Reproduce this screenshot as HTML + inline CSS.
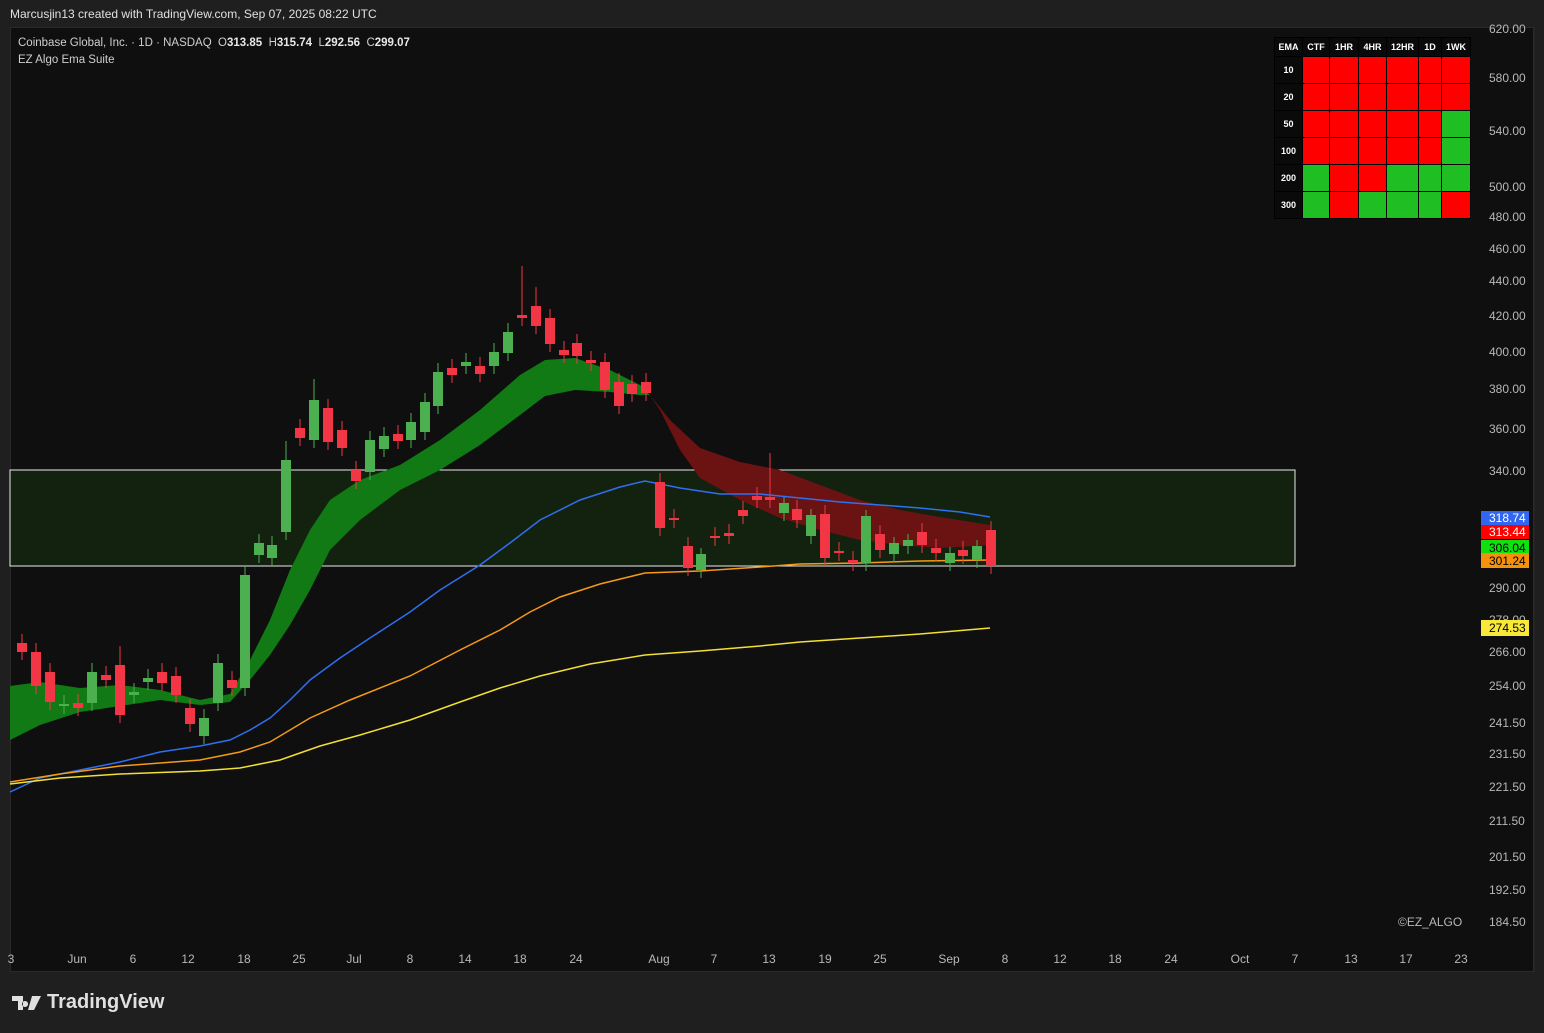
<!DOCTYPE html>
<html><head><meta charset="utf-8"><style>
body{margin:0;width:1544px;height:1033px;background:#1f1f1f;overflow:hidden;font-family:"Liberation Sans",sans-serif;}
#top{position:absolute;left:10px;top:7px;font-size:12px;color:#e0e0e0;}
#chart{position:absolute;left:10px;top:27px;width:1524px;height:945px;background:#0f0f0f;border:1px solid #2a2a2a;box-sizing:border-box;}
#legend{position:absolute;left:18px;top:35px;font-size:11.5px;color:#cfcfcf;line-height:17px;}
#legend b{color:#e8e8e8;}
#logo{position:absolute;left:12px;top:991px;color:#e0e0e0;font-size:20px;font-weight:bold;display:flex;align-items:center;gap:5px;}
table{position:absolute;left:1274px;top:37px;border-collapse:collapse;font-size:9px;font-weight:bold;color:#fff;table-layout:fixed;}
td{border:1px solid #000;height:26px;text-align:center;padding:0;}
td.h{height:18px;background:#0a0a0a}
td.l{background:#0a0a0a}
.r{background:#ff0000}.g{background:#1fbf24}
</style></head><body>
<div id="top">Marcusjin13 created with TradingView.com, Sep 07, 2025 08:22 UTC</div>
<div id="chart"></div>
<svg width="1544" height="1033" style="position:absolute;left:0;top:0" id="s">
<line x1="1534" y1="27" x2="1534" y2="972" stroke="#2a2a2a"/>
<rect x="10" y="470" width="1285" height="96" fill="#13220f" stroke="#e8e8e8" stroke-width="1"/>
<path d="M10 686 L40 682 L80 688 L120 685 L160 690 L200 700 L230 694 L250 660 L270 620 L290 570 L310 530 L330 500 L360 480 L400 465 L440 440 L480 410 L520 375 L545 360 L575 358 L610 370 L640 385 L650 395 L640 395 L610 392 L575 390 L545 396 L520 415 L480 445 L440 470 L400 490 L360 520 L330 550 L310 590 L290 625 L270 655 L250 680 L230 702 L200 705 L160 700 L120 706 L80 712 L40 725 L10 740 Z" fill="#117a14"/>
<path d="M650 395 L670 420 L700 448 L740 462 L780 470 L820 485 L860 500 L900 510 L940 517 L990 525 L990 545 L940 548 L900 545 L860 540 L820 530 L780 518 L740 500 L700 478 L680 450 L660 410 Z" fill="#6b1212"/>
<polyline fill="none" stroke="#2f6ff0" stroke-width="1.5" points="10,792 40,778 80,770 120,762 160,752 200,746 230,740 250,730 270,718 290,700 310,680 340,658 370,638 410,612 440,590 480,565 510,543 540,520 580,500 620,487 645,481 680,488 720,494 760,494 800,498 840,502 880,505 920,508 960,512 990,517"/>
<polyline fill="none" stroke="#f59a16" stroke-width="1.5" points="10,782 60,774 120,766 200,760 240,752 270,742 310,718 350,700 410,676 460,650 500,630 530,612 560,597 600,584 645,573 700,571 760,567 800,564 860,563 920,561 990,560"/>
<polyline fill="none" stroke="#f2e034" stroke-width="1.5" points="10,784 60,778 120,774 200,771 240,768 280,760 320,746 360,735 410,720 460,702 500,688 540,676 590,664 645,655 700,651 760,646 800,642 860,638 920,634 990,628"/>
<g id="c"></g>
<g font-size="12" fill="#b8b8b8" font-family="Liberation Sans,sans-serif">
<text x="1489" y="33">620.00</text><text x="1489" y="82">580.00</text><text x="1489" y="135">540.00</text><text x="1489" y="191">500.00</text><text x="1489" y="221">480.00</text><text x="1489" y="253">460.00</text><text x="1489" y="285">440.00</text><text x="1489" y="320">420.00</text><text x="1489" y="356">400.00</text><text x="1489" y="393">380.00</text><text x="1489" y="433">360.00</text><text x="1489" y="475">340.00</text><text x="1489" y="592">290.00</text><text x="1489" y="624">278.00</text><text x="1489" y="656">266.00</text><text x="1489" y="690">254.00</text><text x="1489" y="727">241.50</text><text x="1489" y="758">231.50</text><text x="1489" y="791">221.50</text><text x="1489" y="825">211.50</text><text x="1489" y="861">201.50</text><text x="1489" y="894">192.50</text><text x="1489" y="926">184.50</text>
<rect x="1481" y="511" width="48" height="14" fill="#3166f0"/><text x="1489" y="522" fill="#fff">318.74</text>
<rect x="1481" y="525" width="48" height="14" fill="#ff0000"/><text x="1489" y="536" fill="#fff">313.44</text>
<rect x="1481" y="540" width="48" height="13" fill="#10e010"/><text x="1489" y="552" fill="#000">306.04</text>
<rect x="1481" y="553" width="48" height="15" fill="#f7900a"/><text x="1489" y="565" fill="#000">301.24</text>
<rect x="1481" y="620" width="48" height="16" fill="#f7e83a"/><text x="1489" y="632" fill="#000">274.53</text>
<text x="1398" y="926">©EZ_ALGO</text>
<g text-anchor="middle"><text x="11" y="963">3</text><text x="77" y="963">Jun</text><text x="133" y="963">6</text><text x="188" y="963">12</text><text x="244" y="963">18</text><text x="299" y="963">25</text><text x="354" y="963">Jul</text><text x="410" y="963">8</text><text x="465" y="963">14</text><text x="520" y="963">18</text><text x="576" y="963">24</text><text x="659" y="963">Aug</text><text x="714" y="963">7</text><text x="769" y="963">13</text><text x="825" y="963">19</text><text x="880" y="963">25</text><text x="949" y="963">Sep</text><text x="1005" y="963">8</text><text x="1060" y="963">12</text><text x="1115" y="963">18</text><text x="1171" y="963">24</text><text x="1240" y="963">Oct</text><text x="1295" y="963">7</text><text x="1351" y="963">13</text><text x="1406" y="963">17</text><text x="1461" y="963">23</text></g>
</g>
</svg>
<div id="legend">Coinbase Global, Inc. · 1D · NASDAQ &nbsp;O<b>313.85</b> &nbsp;H<b>315.74</b> &nbsp;L<b>292.56</b> &nbsp;C<b>299.07</b><br>EZ Algo Ema Suite</div>
<table>
<colgroup><col style="width:28px"><col style="width:27px"><col style="width:29px"><col style="width:28px"><col style="width:32px"><col style="width:23px"><col style="width:29px"></colgroup>
<tr><td class="h l">EMA</td><td class="h">CTF</td><td class="h">1HR</td><td class="h">4HR</td><td class="h">12HR</td><td class="h">1D</td><td class="h">1WK</td></tr>
<tr><td class="l">10</td><td class="r"></td><td class="r"></td><td class="r"></td><td class="r"></td><td class="r"></td><td class="r"></td></tr>
<tr><td class="l">20</td><td class="r"></td><td class="r"></td><td class="r"></td><td class="r"></td><td class="r"></td><td class="r"></td></tr>
<tr><td class="l">50</td><td class="r"></td><td class="r"></td><td class="r"></td><td class="r"></td><td class="r"></td><td class="g"></td></tr>
<tr><td class="l">100</td><td class="r"></td><td class="r"></td><td class="r"></td><td class="r"></td><td class="r"></td><td class="g"></td></tr>
<tr><td class="l">200</td><td class="g"></td><td class="r"></td><td class="r"></td><td class="g"></td><td class="g"></td><td class="g"></td></tr>
<tr><td class="l">300</td><td class="g"></td><td class="r"></td><td class="g"></td><td class="g"></td><td class="g"></td><td class="r"></td></tr>
</table>
<div id="logo"><svg width="30" height="18" viewBox="0 0 30 18"><path d="M0 2h11v14h-5v-9h-6z M13 7a3 3 0 1 0 0.1 0z M20 2h9l-7 14h-6z" fill="#e0e0e0"/></svg>TradingView</div>
<script>
var d=[[22,643,652,'r'],[36,652,686,'r'],[50,672,702,'r'],[64,704,706,'g'],[78,703,708,'r'],[92,672,703,'g'],[106,675,680,'r'],[120,665,715,'r'],[134,692,695,'g'],[148,678,682,'g'],[162,672,683,'r'],[176,676,695,'r'],[190,708,724,'r'],[204,718,736,'g'],[218,663,703,'g'],[232,680,688,'r'],[245,575,688,'g'],[259,543,555,'g'],[272,545,558,'g'],[286,460,532,'g'],[300,428,438,'r'],[314,400,440,'g'],[328,408,442,'r'],[342,430,448,'r'],[356,470,481,'r'],[370,440,472,'g'],[384,436,449,'g'],[398,434,441,'r'],[411,422,440,'g'],[425,402,432,'g'],[438,372,406,'g'],[452,368,375,'r'],[466,362,366,'g'],[480,366,374,'r'],[494,352,366,'g'],[508,332,353,'g'],[522,315,318,'r'],[536,306,326,'r'],[550,318,344,'r'],[564,350,355,'r'],[577,343,356,'r'],[591,360,363,'r'],[605,362,390,'r'],[619,382,406,'r'],[632,384,394,'r'],[646,382,393,'r'],[660,482,528,'r'],[674,518,520,'r'],[688,546,568,'r'],[701,554,570,'g'],[715,536,538,'r'],[729,533,536,'r'],[743,510,516,'r'],[757,496,500,'r'],[770,497,500,'r'],[784,503,513,'g'],[797,509,520,'r'],[811,515,536,'g'],[825,514,558,'r'],[839,551,553,'r'],[853,560,563,'r'],[866,516,563,'g'],[880,534,550,'r'],[894,543,554,'g'],[908,540,546,'g'],[922,532,545,'r'],[936,548,553,'r'],[950,553,563,'g'],[963,550,556,'r'],[977,546,560,'g'],[991,530,566,'r']];
var ext={522:40,536:10,286:10,770:35,314:12,120:10};
var h='';d.forEach(function(c){var col=c[3]=='r'?'#f23645':'#4caf50';var w1=c[1]-(c[3]=='g'&&c[0]>640?6:9)-(ext[c[0]]||0),w2=c[2]+8;h+='<line x1="'+c[0]+'" x2="'+c[0]+'" y1="'+w1+'" y2="'+w2+'" stroke="'+col+'"/><rect x="'+(c[0]-5)+'" y="'+c[1]+'" width="10" height="'+Math.max(2,c[2]-c[1])+'" fill="'+col+'"/>';});
document.getElementById('c').innerHTML=h;
</script>
</body></html>
